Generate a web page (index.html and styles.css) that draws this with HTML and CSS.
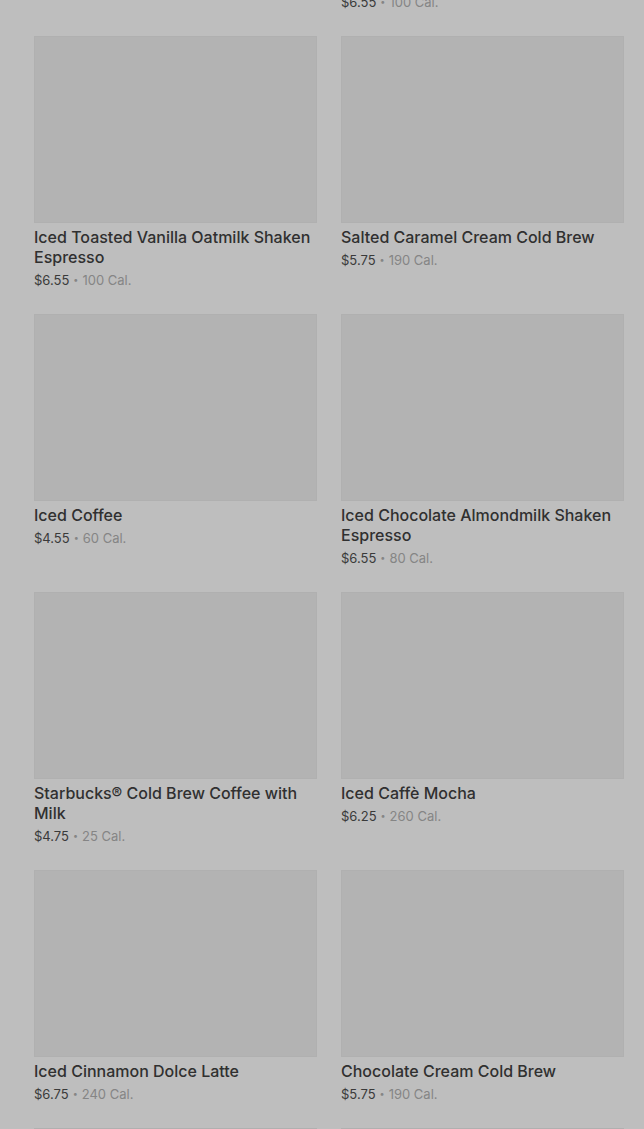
FILE: index.html
```html
<!DOCTYPE html>
<html lang="en">
<head>
<meta charset="utf-8">
<title>Menu</title>
<link rel="stylesheet" href="styles.css">
</head>
<body>
<main class="menu">
  <div class="grid">
    <div class="card card--cut"></div>
    <div class="card card--cut">
      <p class="meta"><span class="price">$6.55</span><span class="dot">•</span><span class="cal">100 Cal.</span></p>
    </div>

    <div class="card">
      <div class="thumb"></div>
      <h3 class="name">Iced Toasted Vanilla Oatmilk Shaken Espresso</h3>
      <p class="meta"><span class="price">$6.55</span><span class="dot">•</span><span class="cal">100 Cal.</span></p>
    </div>
    <div class="card">
      <div class="thumb"></div>
      <h3 class="name">Salted Caramel Cream Cold Brew</h3>
      <p class="meta"><span class="price">$5.75</span><span class="dot">•</span><span class="cal">190 Cal.</span></p>
    </div>

    <div class="card">
      <div class="thumb"></div>
      <h3 class="name">Iced Coffee</h3>
      <p class="meta"><span class="price">$4.55</span><span class="dot">•</span><span class="cal">60 Cal.</span></p>
    </div>
    <div class="card">
      <div class="thumb"></div>
      <h3 class="name">Iced Chocolate Almondmilk Shaken Espresso</h3>
      <p class="meta"><span class="price">$6.55</span><span class="dot">•</span><span class="cal">80 Cal.</span></p>
    </div>

    <div class="card">
      <div class="thumb"></div>
      <h3 class="name">Starbucks® Cold Brew Coffee with Milk</h3>
      <p class="meta"><span class="price">$4.75</span><span class="dot">•</span><span class="cal">25 Cal.</span></p>
    </div>
    <div class="card">
      <div class="thumb"></div>
      <h3 class="name">Iced Caffè Mocha</h3>
      <p class="meta"><span class="price">$6.25</span><span class="dot">•</span><span class="cal">260 Cal.</span></p>
    </div>

    <div class="card">
      <div class="thumb"></div>
      <h3 class="name">Iced Cinnamon Dolce Latte</h3>
      <p class="meta"><span class="price">$6.75</span><span class="dot">•</span><span class="cal">240 Cal.</span></p>
    </div>
    <div class="card">
      <div class="thumb"></div>
      <h3 class="name">Chocolate Cream Cold Brew</h3>
      <p class="meta"><span class="price">$5.75</span><span class="dot">•</span><span class="cal">190 Cal.</span></p>
    </div>

    <div class="card">
      <div class="thumb"></div>
    </div>
    <div class="card">
      <div class="thumb"></div>
    </div>
  </div>
</main>
</body>
</html>
```

FILE: styles.css
```css
html, body {
  margin: 0;
  padding: 0;
  background: #bebebe;
  height: 100%;
  overflow: hidden;
}

body {
  font-family: Inter, "Noto Sans", "Liberation Sans", sans-serif;
  color: #2f2f2f;
}

.menu {
  padding: 0 20px 0 34px;
}

.grid {
  display: grid;
  grid-template-columns: 1fr 1fr;
  column-gap: 24px;
  row-gap: 24px;
  margin-top: -8px;
}

.card {
  display: flex;
  flex-direction: column;
  min-width: 0;
}

.thumb {
  height: 187px;
  background: #b3b3b3;
  box-shadow: inset 0 0 0 1px #b0b0b0;
}

.name {
  margin: 4px 0 0;
  font-size: 16px;
  line-height: 20px;
  font-weight: 500;
  color: #303030;
  letter-spacing: 0;
}

.meta {
  margin: 3px 0 0;
  font-size: 13px;
  line-height: 20px;
  display: flex;
  align-items: center;
}

.card--cut .meta {
  margin-top: 0;
}

.price {
  color: #3a3a3a;
}

.dot {
  font-size: 9px;
  color: #858585;
  margin: 0 4px;
}

.cal {
  color: #858585;
}
```
